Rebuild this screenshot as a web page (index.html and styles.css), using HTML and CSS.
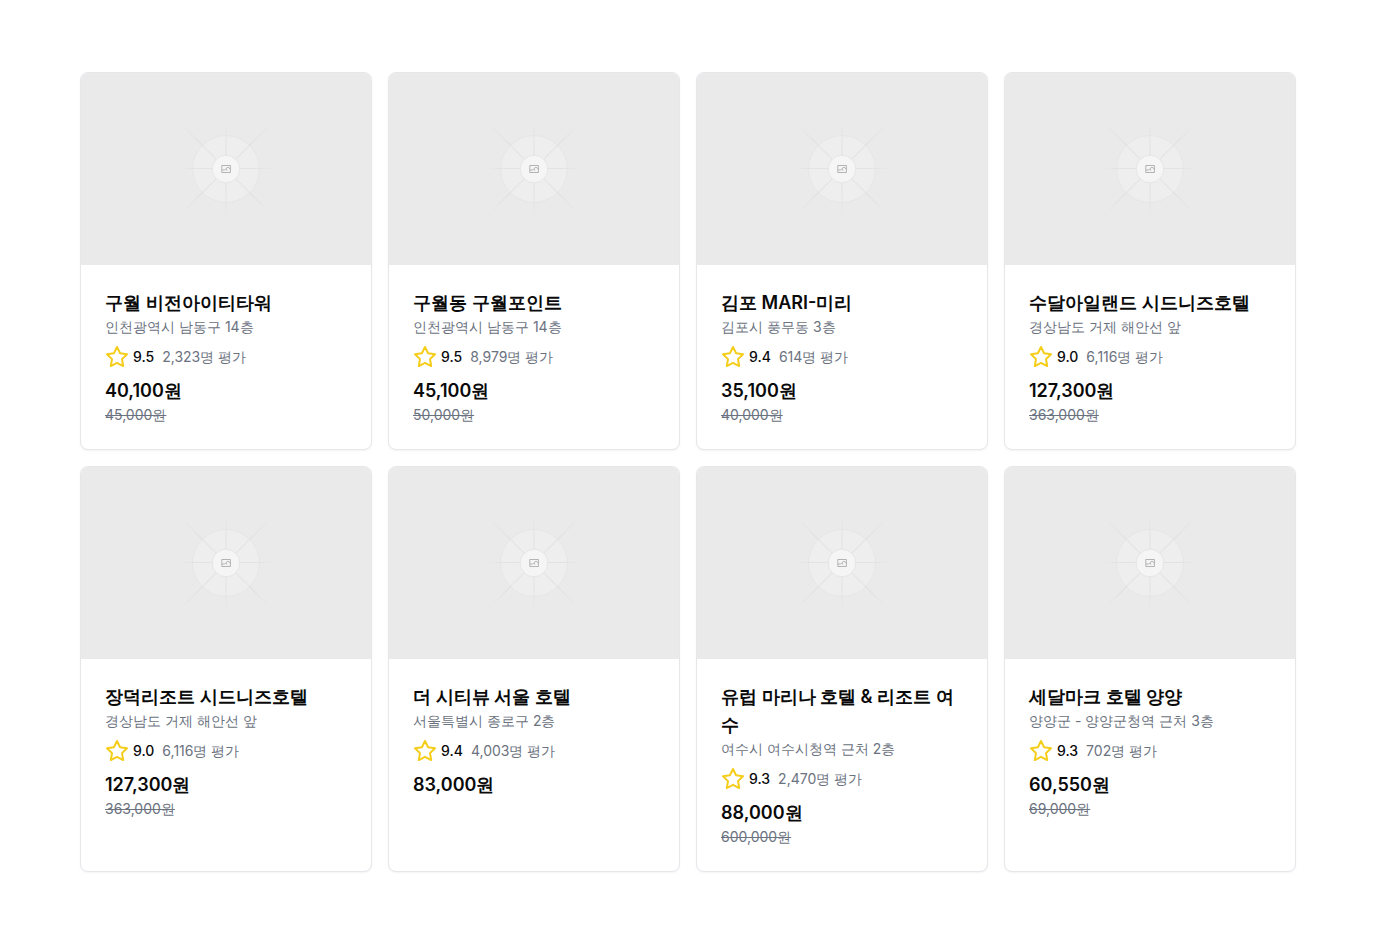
FILE: index.html
```html
<!DOCTYPE html>
<html lang="en">
<head>
<meta charset="utf-8">
<meta name="viewport" content="width=device-width, initial-scale=1">
<title>호텔</title>
<link rel="stylesheet" href="styles.css">
</head>
<body>
<svg class="sprite" aria-hidden="true">
  <defs>
    <linearGradient id="ray-fade" gradientUnits="userSpaceOnUse" x1="98" y1="0" x2="192" y2="0">
      <stop offset="0" stop-color="#c9c9c9" stop-opacity="0"/>
      <stop offset="0.2" stop-color="#c9c9c9"/>
      <stop offset="0.8" stop-color="#c9c9c9"/>
      <stop offset="1" stop-color="#c9c9c9" stop-opacity="0"/>
    </linearGradient>
    <linearGradient id="diagonal-fade" gradientUnits="userSpaceOnUse" x1="80" y1="0" x2="210" y2="0">
      <stop offset="0" stop-color="#c9c9c9" stop-opacity="0"/>
      <stop offset="0.2" stop-color="#c9c9c9"/>
      <stop offset="0.8" stop-color="#c9c9c9"/>
      <stop offset="1" stop-color="#c9c9c9" stop-opacity="0"/>
    </linearGradient>
    <symbol id="placeholder" viewBox="0 0 290 192">
      <circle cx="145" cy="96" r="33.4" fill="#fafafa" fill-opacity="0.25" stroke="#e2e2e2" stroke-width="0.6"/>
      <g fill-opacity="0.4">
        <rect fill="url(#ray-fade)" x="98" y="95.2" width="94" height="0.8"/>
        <rect fill="url(#ray-fade)" x="98" y="95.6" width="94" height="0.8" transform="rotate(90 145 96)"/>
        <rect fill="url(#diagonal-fade)" x="80" y="95.6" width="130" height="0.8" transform="rotate(45 145 96)"/>
        <rect fill="url(#diagonal-fade)" x="80" y="95.6" width="130" height="0.8" transform="rotate(-45 145 96)"/>
      </g>
      <circle cx="145" cy="96" r="13.8" fill="#f5f5f5" stroke="#dcdcdc" stroke-width="0.6"/>
      <g fill="none" stroke="#a3a3a3" stroke-width="0.8">
        <path d="M140.8 92.5h8.6v7h-8.6z"/>
        <path d="M141 97h2.4l1.2-.6 1.6 1M145.4 96.4v-1.2q1.6-1.8 3-.2l1 1.4"/>
      </g>
    </symbol>
    <symbol id="star" viewBox="0 0 24 24">
      <polygon points="12 2 15.09 8.26 22 9.27 17 14.14 18.18 21.02 12 17.77 5.82 21.02 7 14.14 2 9.27 8.91 8.26 12 2" fill="none" stroke="#f5cd1b" stroke-width="2" stroke-linecap="round" stroke-linejoin="round"/>
    </symbol>
  </defs>
</svg>
<main class="hotels">
  <article class="card">
    <svg class="photo" aria-hidden="true"><use href="#placeholder"/></svg>
    <div class="body">
      <h2 class="name">구월 비전아이티타워</h2>
      <p class="place">인천광역시 남동구 14층</p>
      <div class="rating"><svg class="star" aria-hidden="true"><use href="#star"/></svg><span class="score">9.5</span><span class="reviews">2,323명 평가</span></div>
      <p class="price">40,100원</p>
      <p class="was"><s>45,000원</s></p>
    </div>
  </article>
  <article class="card">
    <svg class="photo" aria-hidden="true"><use href="#placeholder"/></svg>
    <div class="body">
      <h2 class="name">구월동 구월포인트</h2>
      <p class="place">인천광역시 남동구 14층</p>
      <div class="rating"><svg class="star" aria-hidden="true"><use href="#star"/></svg><span class="score">9.5</span><span class="reviews">8,979명 평가</span></div>
      <p class="price">45,100원</p>
      <p class="was"><s>50,000원</s></p>
    </div>
  </article>
  <article class="card">
    <svg class="photo" aria-hidden="true"><use href="#placeholder"/></svg>
    <div class="body">
      <h2 class="name">김포 MARI-미리</h2>
      <p class="place">김포시 풍무동 3층</p>
      <div class="rating"><svg class="star" aria-hidden="true"><use href="#star"/></svg><span class="score">9.4</span><span class="reviews">614명 평가</span></div>
      <p class="price">35,100원</p>
      <p class="was"><s>40,000원</s></p>
    </div>
  </article>
  <article class="card">
    <svg class="photo" aria-hidden="true"><use href="#placeholder"/></svg>
    <div class="body">
      <h2 class="name">수달아일랜드 시드니즈호텔</h2>
      <p class="place">경상남도 거제 해안선 앞</p>
      <div class="rating"><svg class="star" aria-hidden="true"><use href="#star"/></svg><span class="score">9.0</span><span class="reviews">6,116명 평가</span></div>
      <p class="price">127,300원</p>
      <p class="was"><s>363,000원</s></p>
    </div>
  </article>
  <article class="card">
    <svg class="photo" aria-hidden="true"><use href="#placeholder"/></svg>
    <div class="body">
      <h2 class="name">장덕리조트 시드니즈호텔</h2>
      <p class="place">경상남도 거제 해안선 앞</p>
      <div class="rating"><svg class="star" aria-hidden="true"><use href="#star"/></svg><span class="score">9.0</span><span class="reviews">6,116명 평가</span></div>
      <p class="price">127,300원</p>
      <p class="was"><s>363,000원</s></p>
    </div>
  </article>
  <article class="card">
    <svg class="photo" aria-hidden="true"><use href="#placeholder"/></svg>
    <div class="body">
      <h2 class="name">더 시티뷰 서울 호텔</h2>
      <p class="place">서울특별시 종로구 2층</p>
      <div class="rating"><svg class="star" aria-hidden="true"><use href="#star"/></svg><span class="score">9.4</span><span class="reviews">4,003명 평가</span></div>
      <p class="price">83,000원</p>
    </div>
  </article>
  <article class="card">
    <svg class="photo" aria-hidden="true"><use href="#placeholder"/></svg>
    <div class="body">
      <h2 class="name">유럽 마리나 호텔 &amp; 리조트 여수</h2>
      <p class="place">여수시 여수시청역 근처 2층</p>
      <div class="rating"><svg class="star" aria-hidden="true"><use href="#star"/></svg><span class="score">9.3</span><span class="reviews">2,470명 평가</span></div>
      <p class="price">88,000원</p>
      <p class="was"><s>600,000원</s></p>
    </div>
  </article>
  <article class="card">
    <svg class="photo" aria-hidden="true"><use href="#placeholder"/></svg>
    <div class="body">
      <h2 class="name">세달마크 호텔 양양</h2>
      <p class="place">양양군 - 양양군청역 근처 3층</p>
      <div class="rating"><svg class="star" aria-hidden="true"><use href="#star"/></svg><span class="score">9.3</span><span class="reviews">702명 평가</span></div>
      <p class="price">60,550원</p>
      <p class="was"><s>69,000원</s></p>
    </div>
  </article>
</main>
</body>
</html>
```
FILE: styles.css
```css
*, *::before, *::after { box-sizing: border-box; }

body {
  margin: 0;
  background: #fff;
  color: #0a0a0a;
  font-family: Inter, sans-serif;
  font-size: 14px;
  line-height: 20px;
}

h2, p { margin: 0; }

.sprite { position: absolute; width: 0; height: 0; }

.hotels {
  display: grid;
  grid-template-columns: repeat(auto-fit, minmax(260px, 1fr));
  gap: 16px;
  padding: 72px 80px;
}

.card {
  overflow: hidden;
  border: 1px solid #e5e7eb;
  border-radius: 8px;
  background: #fff;
  box-shadow: 0 1px 2px rgba(0, 0, 0, 0.05);
}

.photo {
  display: block;
  width: 100%;
  height: 192px;
  background: #eaeaea;
}

.body { padding: 24px; }

.name, .price {
  font-size: 18px;
  line-height: 28px;
  font-weight: 600;
}

.place, .reviews, .was { color: #6b7280; }

.rating {
  display: flex;
  align-items: center;
  margin: 8px 0;
}

.star { width: 24px; height: 24px; margin-right: 4px; }

.score { margin-right: 8px; font-weight: 500; }
```
